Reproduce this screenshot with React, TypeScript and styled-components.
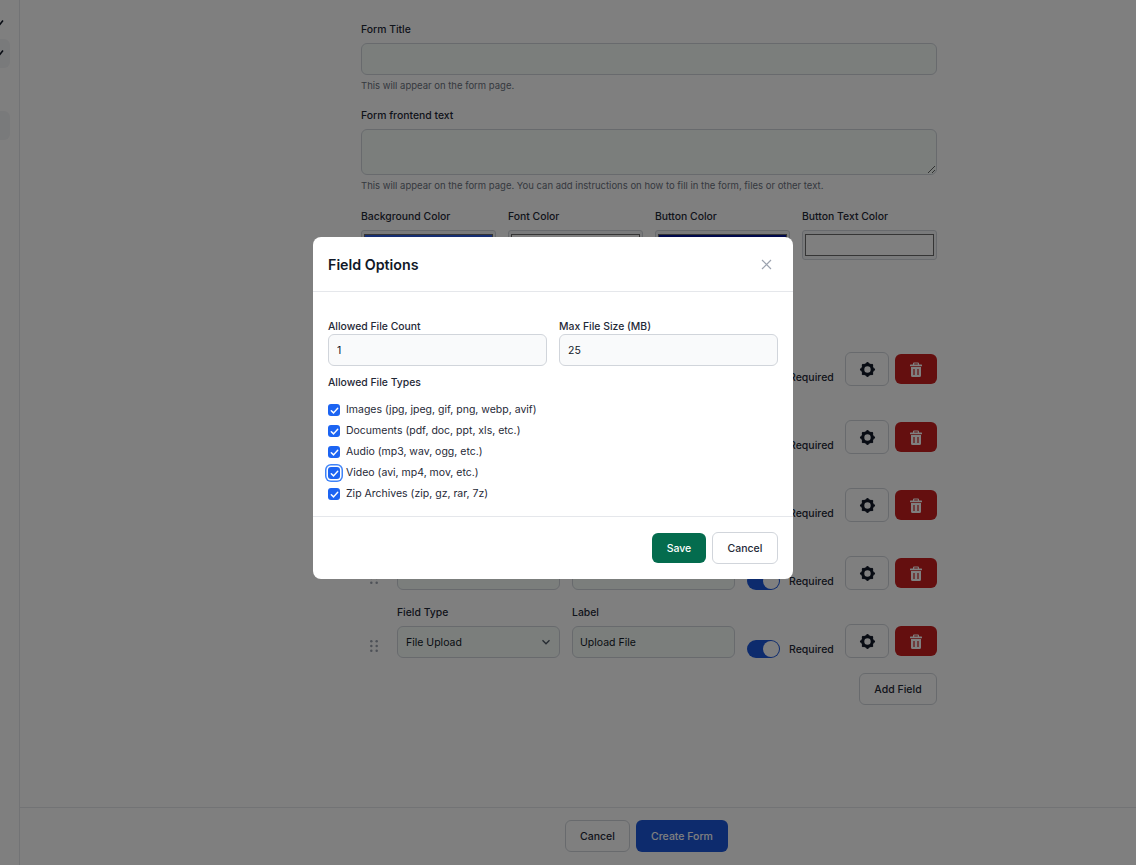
import styled, { createGlobalStyle } from 'styled-components';

const GlobalStyle = createGlobalStyle`
	html, body {
		margin: 0;
		height: 100%;
		background: #ffffff;
		overflow: hidden;
	}
	body, input, textarea, select, button {
		font-family: Inter, "Liberation Sans", sans-serif;
	}
	* {
		box-sizing: border-box;
	}
`;

const Page = styled.div`
	display: flex;
	height: 865px;
	width: 1136px;
	color: #111827;
`;

const Sidebar = styled.aside`
	flex: 0 0 20px;
	border-right: 1px solid #e5e7eb;
	padding-top: 15px;
	overflow: hidden;
`;

const SideItem = styled.div<{ $active?: boolean }>`
	width: 10px;
	height: ${p => p.$active ? '29px' : '18px'};
	margin-bottom: ${p => p.$active ? '43px' : '6px'};
	border-radius: 0 6px 6px 0;
	background: ${p => p.$active ? '#f3f4f6' : 'transparent'};
	display: flex;
	align-items: center;
	svg {
		margin-left: -6px;
	}
`;

const Main = styled.main`
	flex: 1;
	display: flex;
	flex-direction: column;
	min-width: 0;
`;

const Content = styled.div`
	flex: 1;
	padding: 22px 199px 0 341px;
`;

const Footer = styled.footer`
	flex: 0 0 58px;
	border-top: 1px solid #e5e7eb;
	display: flex;
	gap: 6px;
	padding: 12px 0 0 545px;
`;

const FieldBlock = styled.div<{ $gap: number }>`
	margin-bottom: ${p => p.$gap}px;
`;

const Label = styled.label`
	display: block;
	min-height: 15px;
	padding-top: 1px;
	font-size: 10.4px;
	font-weight: 500;
	line-height: 14px;
	color: #1f2937;
`;

const Hint = styled.p`
	margin: 4px 0 0;
	font-size: 9.5px;
	line-height: 13px;
	color: #6b7280;
`;

const PageInput = styled.input`
	display: block;
	width: 100%;
	height: 32px;
	margin-top: 6px;
	padding: 0 7px;
	font-size: 10.5px;
	color: #111827;
	background: #f6fdf9;
	border: 1px solid #d1d5db;
	border-radius: 6px;
`;

const PageArea = styled.textarea`
	display: block;
	width: 100%;
	height: 46px;
	margin-top: 6px;
	background: #f6fdf9;
	border: 1px solid #d1d5db;
	border-radius: 6px;
`;

const ColorRow = styled.div`
	display: grid;
	grid-template-columns: repeat(4, 135px);
	gap: 12px;
`;

const ColorOuter = styled.div`
	height: 30px;
	margin-top: 6px;
	padding: 3px 2px;
	background: #f3f4f6;
	border: 1px solid #d1d5db;
	border-radius: 3px;
`;

const ColorInner = styled.div<{ $color: string }>`
	height: 100%;
	background: ${p => p.$color};
	border: 1px solid #6b6b6b;
`;

const Rows = styled.div`
	margin-top: 73px;
	display: flex;
	flex-direction: column;
	gap: 15px;
`;

const Row = styled.div`
	display: flex;
	align-items: flex-end;
`;

const Drag = styled.div`
	flex: 0 0 36px;
	height: 24px;
	display: flex;
	align-items: center;
	padding-left: 8.5px;
	color: #9ca3af;
`;

const RowField = styled.div`
	flex: 0 0 163px;
	margin-right: 12px;
`;

const SelectBox = styled.div`
	height: 32px;
	margin-top: 6px;
	padding: 0 8px;
	display: flex;
	align-items: center;
	justify-content: space-between;
	font-size: 10.5px;
	color: #111827;
	background: #f6fdf9;
	border: 1px solid #d1d5db;
	border-radius: 6px;
`;

const Toggle = styled.div`
	flex: 0 0 33px;
	height: 18px;
	border-radius: 9px;
	background: #1a56db;
	margin-right: 9px;
	padding: 1px;
	display: flex;
	justify-content: flex-end;
	&::after {
		content: '';
		width: 16px;
		height: 16px;
		border-radius: 50%;
		background: #ffffff;
	}
`;

const RequiredText = styled.span`
	flex: 0 0 56px;
	font-size: 10.5px;
	font-weight: 500;
	line-height: 16px;
	color: #1f2937;
`;

const GearButton = styled.button`
	width: 44px;
	height: 34px;
	margin-right: 6px;
	display: flex;
	align-items: center;
	justify-content: center;
	background: #ffffff;
	border: 1px solid #d1d5db;
	border-radius: 6px;
	color: #111827;
	padding: 0;
`;

const TrashButton = styled.button`
	width: 42px;
	height: 30px;
	margin-bottom: 2px;
	display: flex;
	align-items: center;
	justify-content: center;
	background: #c81e1e;
	border: 0;
	border-radius: 6px;
	color: #ffffff;
	padding: 0;
`;

const AddRow = styled.div`
	display: flex;
	justify-content: flex-end;
	margin-top: 15px;
`;

const OutlineButton = styled.button<{ $w: number; $h: number }>`
	width: ${p => p.$w}px;
	height: ${p => p.$h}px;
	padding: 0;
	font-size: 10.5px;
	font-weight: 500;
	color: #1f2937;
	background: #ffffff;
	border: 1px solid #d1d5db;
	border-radius: 6px;
`;

const SolidButton = styled.button<{ $bg: string; $w: number; $h: number }>`
	width: ${p => p.$w}px;
	height: ${p => p.$h}px;
	padding: 0;
	font-size: 10.5px;
	font-weight: 500;
	color: #ffffff;
	background: ${p => p.$bg};
	border: 0;
	border-radius: 6px;
`;

const Overlay = styled.div`
	position: fixed;
	inset: 0;
	background: rgba(0, 0, 0, 0.5);
	padding: 237px 0 0 313px;
`;

const Modal = styled.div`
	width: 480px;
	height: 342px;
	background: #ffffff;
	border-radius: 8px;
`;

const ModalHeader = styled.div`
	height: 55px;
	padding: 0 15px;
	display: flex;
	align-items: center;
	justify-content: space-between;
	border-bottom: 1px solid #e5e7eb;
`;

const ModalTitle = styled.h3`
	margin: 0;
	font-size: 14.25px;
	font-weight: 600;
	color: #111827;
`;

const CloseButton = styled.button`
	width: 24px;
	height: 24px;
	padding: 0;
	display: flex;
	align-items: center;
	justify-content: center;
	background: transparent;
	border: 0;
	color: #9ca3af;
`;

const ModalBody = styled.div`
	height: 225px;
	padding: 27px 15px 0;
	border-bottom: 1px solid #e5e7eb;
`;

const TwoCols = styled.div`
	display: grid;
	grid-template-columns: 1fr 1fr;
	gap: 12px;
`;

const ModalInput = styled.input`
	display: block;
	width: 100%;
	height: 32px;
	padding: 0 8px;
	font-size: 10.5px;
	color: #111827;
	background: #f9fafb;
	border: 1px solid #d1d5db;
	border-radius: 6px;
`;

const TypesLabel = styled(Label)`
	margin: 9px 0 13px;
`;

const CheckList = styled.div`
	display: flex;
	flex-direction: column;
	gap: 7px;
`;

const CheckRow = styled.div`
	display: flex;
	align-items: center;
	height: 14px;
	gap: 6px;
	font-size: 10.5px;
	line-height: 14px;
	color: #1f2937;
`;

const CheckBox = styled.span<{ $focused?: boolean }>`
	width: 12px;
	height: 12px;
	flex: none;
	display: flex;
	align-items: center;
	justify-content: center;
	border-radius: 3px;
	background: #1c64f2;
	box-shadow: ${p => p.$focused ? '0 0 0 1.5px #ffffff, 0 0 0 3px #3f83f8' : 'none'};
`;

const ModalFooter = styled.div`
	display: flex;
	justify-content: flex-end;
	align-items: center;
	gap: 6px;
	padding: 15px 15px 0;
`;

const fileTypes = [
	'Images (jpg, jpeg, gif, png, webp, avif)',
	'Documents (pdf, doc, ppt, xls, etc.)',
	'Audio (mp3, wav, ogg, etc.)',
	'Video (avi, mp4, mov, etc.)',
	'Zip Archives (zip, gz, rar, 7z)',
];

const colors = [
	{ label: 'Background Color', value: '#2b5ce6' },
	{ label: 'Font Color', value: '#ffffff' },
	{ label: 'Button Color', value: '#00129a' },
	{ label: 'Button Text Color', value: '#ffffff' },
];

const DragDots = () => (
	<svg width="8" height="12" viewBox="0 0 8 12" fill="currentColor">
		{[1.3, 6, 10.7].map(y => (
			<g key={y}>
				<circle cx="1.3" cy={y} r="1.25" />
				<circle cx="6.7" cy={y} r="1.25" />
			</g>
		))}
	</svg>
);

const Tick = ({ size, width }: { size: number; width: number }) => (
	<svg width={size} height={size} viewBox="0 0 12 12" fill="none" stroke="#ffffff" strokeWidth={width} strokeLinecap="round" strokeLinejoin="round">
		<path d="M2.5 6.2 5 8.6 9.5 3.6" />
	</svg>
);

const SideTick = () => (
	<svg width="10" height="10" viewBox="0 0 10 10" fill="none" stroke="#111827" strokeWidth="1.6">
		<path d="M1 5.5 3.8 8 9 1.5" />
	</svg>
);

const GearIcon = () => (
	<svg width="17" height="17" viewBox="0 0 17 17" fill="none" stroke="currentColor">
		<circle cx="8.5" cy="8.5" r="4.8" strokeWidth="3.2" />
		{[0, 45, 90, 135].map(a => (
			<path key={a} d="M8.5 2.2V14.8" strokeWidth="2.6" strokeLinecap="round" strokeDasharray="0.6 11.4" transform={`rotate(${a} 8.5 8.5)`} />
		))}
	</svg>
);

const TrashIcon = () => (
	<svg width="12" height="15" viewBox="0 0 12 15" fill="currentColor" fillRule="evenodd">
		<path d="M4 0.5h4a1 1 0 0 1 1 1V2.5h2.5a.5.5 0 0 1 .5.5v.8a.5.5 0 0 1-.5.5H.5a.5.5 0 0 1-.5-.5V3a.5.5 0 0 1 .5-.5H3V1.5a1 1 0 0 1 1-1ZM4.2 1.6V2.5h3.6V1.6Z" />
		<path d="M1 5h10v8.5A1.5 1.5 0 0 1 9.5 15h-7A1.5 1.5 0 0 1 1 13.5ZM3.4 7v6h1.2V7ZM7.4 7v6h1.2V7Z" />
	</svg>
);

// the first rows sit under the dialog, so their texts stay empty
const FieldRow = ({ covered }: { covered: boolean }) => (
	<Row>
		<Drag><DragDots /></Drag>
		<RowField>
			<Label>{covered ? null : 'Field Type'}</Label>
			<SelectBox>
				{covered ? null : 'File Upload'}
				<svg width="10" height="10" viewBox="0 0 10 10" fill="none" stroke="#4b5563" strokeWidth="1.3">
					<path d="M1.5 3.2 5 6.8 8.5 3.2" />
				</svg>
			</SelectBox>
		</RowField>
		<RowField>
			<Label>{covered ? null : 'Label'}</Label>
			<PageInput defaultValue={covered ? '' : 'Upload File'} />
		</RowField>
		<Toggle />
		<RequiredText>Required</RequiredText>
		<GearButton><GearIcon /></GearButton>
		<TrashButton><TrashIcon /></TrashButton>
	</Row>
);

export default function App() {
	return (
		<>
			<GlobalStyle />
			<Page>
				<Sidebar>
					<SideItem><SideTick /></SideItem>
					<SideItem $active><SideTick /></SideItem>
					<SideItem $active />
				</Sidebar>
				<Main>
					<Content>
						<FieldBlock $gap={16}>
							<Label>Form Title</Label>
							<PageInput />
							<Hint>This will appear on the form page.</Hint>
						</FieldBlock>
						<FieldBlock $gap={17}>
							<Label>Form frontend text</Label>
							<PageArea />
							<Hint>This will appear on the form page. You can add instructions on how to fill in the form, files or other text.</Hint>
						</FieldBlock>
						<ColorRow>
							{colors.map(c => (
								<div key={c.label}>
									<Label>{c.label}</Label>
									<ColorOuter><ColorInner $color={c.value} /></ColorOuter>
								</div>
							))}
						</ColorRow>
						<Rows>
							{[0, 1, 2, 3, 4].map(i => <FieldRow key={i} covered={i < 4} />)}
						</Rows>
						<AddRow>
							<OutlineButton $w={78} $h={32}>Add Field</OutlineButton>
						</AddRow>
					</Content>
					<Footer>
						<OutlineButton $w={65} $h={32}>Cancel</OutlineButton>
						<SolidButton $bg="#1a56db" $w={92} $h={32}>Create Form</SolidButton>
					</Footer>
				</Main>
			</Page>
			<Overlay>
				<Modal>
					<ModalHeader>
						<ModalTitle>Field Options</ModalTitle>
						<CloseButton>
							<svg width="11" height="11" viewBox="0 0 11 11" fill="none" stroke="currentColor" strokeWidth="1.2">
								<path d="M1 1 10 10M10 1 1 10" />
							</svg>
						</CloseButton>
					</ModalHeader>
					<ModalBody>
						<TwoCols>
							<div>
								<Label>Allowed File Count</Label>
								<ModalInput defaultValue="1" />
							</div>
							<div>
								<Label>Max File Size (MB)</Label>
								<ModalInput defaultValue="25" />
							</div>
						</TwoCols>
						<TypesLabel>Allowed File Types</TypesLabel>
						<CheckList>
							{fileTypes.map((t, i) => (
								<CheckRow key={t}>
									<CheckBox $focused={i === 3}><Tick size={11} width={1.6} /></CheckBox>
									{t}
								</CheckRow>
							))}
						</CheckList>
					</ModalBody>
					<ModalFooter>
						<SolidButton $bg="#046c4e" $w={54} $h={30}>Save</SolidButton>
						<OutlineButton $w={66} $h={32}>Cancel</OutlineButton>
					</ModalFooter>
				</Modal>
			</Overlay>
		</>
	);
}
